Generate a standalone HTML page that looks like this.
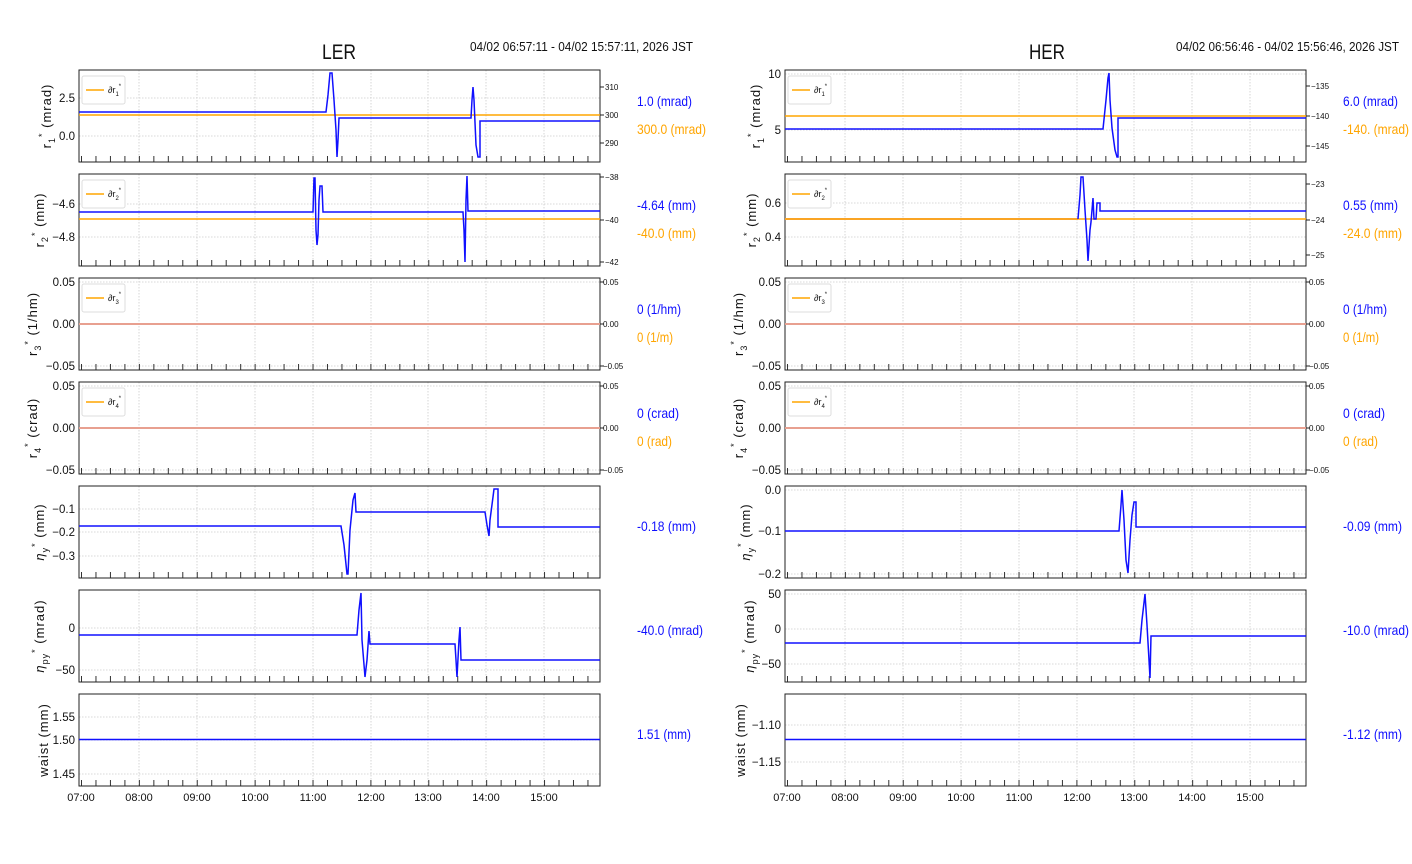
<!DOCTYPE html>
<html><head><meta charset="utf-8"><style>
html,body{margin:0;padding:0;background:#fff;}
svg{display:block;font-family:"Liberation Sans","DejaVu Sans",sans-serif;}
.ax{fill:none;stroke:#222;stroke-width:1}
.hg{stroke:#ccc;stroke-width:0.8;stroke-dasharray:1.5 1.5}
.tk{stroke:#333;stroke-width:6;stroke-dasharray:1 13.47}
.b{fill:none;stroke:#1010ff;stroke-width:1.5}
.o{fill:none;stroke:#ffa500;stroke-width:1.5}
.r{fill:none;stroke:#e8a090;stroke-width:2}
.yl{font-size:11.5px;fill:#111;text-anchor:end}
.yr{font-size:8px;fill:#111}
.lab{font-size:13px;fill:#111;letter-spacing:1px}
.vb{font-size:14px;fill:#1010ff}
.vo{font-size:14px;fill:#ffa500}
.xt{font-size:11px;fill:#111;text-anchor:middle}
</style></head><body>
<svg width="1412" height="864" viewBox="0 0 1412 864">
<defs>
<path id="vgL" d="M139 0v92M197 0v92M255 0v92M313 0v92M371 0v92M428 0v92M486 0v92M544 0v92" stroke="#ccc" stroke-width="0.8" stroke-dasharray="1.5 1.5"/>
<path id="vgH" d="M845 0v92M903 0v92M961 0v92M1019 0v92M1077 0v92M1134 0v92M1192 0v92M1250 0v92" stroke="#ccc" stroke-width="0.8" stroke-dasharray="1.5 1.5"/>
<g id="legL"><rect x="82" y="76" width="43" height="28" fill="#fff" stroke="#ddd" rx="2"/><line x1="86" y1="90" x2="104" y2="90" stroke="#ffa500" stroke-width="1.5"/></g>
</defs>

<text x="339" y="59" font-size="21" text-anchor="middle" fill="#111" textLength="34" lengthAdjust="spacingAndGlyphs">LER</text>
<text x="1047" y="59" font-size="21" text-anchor="middle" fill="#111" textLength="36" lengthAdjust="spacingAndGlyphs">HER</text>
<text x="470" y="51" font-size="13" fill="#111" textLength="223" lengthAdjust="spacingAndGlyphs">04/02 06:57:11 - 04/02 15:57:11, 2026 JST</text>
<text x="1176" y="51" font-size="13" fill="#111" textLength="223" lengthAdjust="spacingAndGlyphs">04/02 06:56:46 - 04/02 15:56:46, 2026 JST</text>

<!-- ========== LER ========== -->
<g>
<use href="#vgL" y="70"/><use href="#vgL" y="174"/><use href="#vgL" y="278"/><use href="#vgL" y="382"/><use href="#vgL" y="486"/><use href="#vgL" y="590"/><use href="#vgL" y="694"/>
<path class="hg" d="M79 98H600M79 136H600M79 204H600M79 237H600M79 282H600M79 324H600M79 366H600M79 386H600M79 428H600M79 470H600M79 509H600M79 532H600M79 556H600M79 628H600M79 670H600M79 717H600M79 740H600M79 774H600"/>
<path class="tk" d="M81 159H600M81 263H600M81 367H600M81 471H600M81 575H600M81 679H600M81 783H600"/>
<rect class="ax" x="79" y="70" width="521" height="92"/>
<rect class="ax" x="79" y="174" width="521" height="92"/>
<rect class="ax" x="79" y="278" width="521" height="92"/>
<rect class="ax" x="79" y="382" width="521" height="92"/>
<rect class="ax" x="79" y="486" width="521" height="92"/>
<rect class="ax" x="79" y="590" width="521" height="92"/>
<rect class="ax" x="79" y="694" width="521" height="92"/>
<use href="#legL"/><text x="108" y="93" font-size="9" fill="#111">∂r<tspan font-size="6" dy="3">1</tspan><tspan font-size="6" dy="-8">*</tspan></text>
<use href="#legL" y="104"/><text x="108" y="197" font-size="9" fill="#111">∂r<tspan font-size="6" dy="3">2</tspan><tspan font-size="6" dy="-8">*</tspan></text>
<use href="#legL" y="208"/><text x="108" y="301" font-size="9" fill="#111">∂r<tspan font-size="6" dy="3">3</tspan><tspan font-size="6" dy="-8">*</tspan></text>
<use href="#legL" y="312"/><text x="108" y="405" font-size="9" fill="#111">∂r<tspan font-size="6" dy="3">4</tspan><tspan font-size="6" dy="-8">*</tspan></text>
<path class="o" d="M79 115H600"/>
<path class="b" d="M79 112H326L328 95L330 73H332L334 100L336 130L337 157L338 140L339 118H471L472 100L473 87L474 100L476 145L478 157H480V121H600"/>
<path class="o" d="M79 219H600"/>
<path class="b" d="M79 212H313L314 178H315L316 230L317 245L318 235L319 200L320 186H322L323 212H463L464 230L465 262L466 200L467 176L468 211H600"/>
<path class="r" d="M79 324H600"/>
<path class="r" d="M79 428H600"/>
<path class="b" d="M79 526H341L344 545L347 574H348L350 530L353 500L355 493L356 512H485L487 525L489 536L490 520L493 497L494 489H498V527H600"/>
<path class="b" d="M79 635H357L359 610L361 593L362 640L365 677L367 660L369 631L370 644H455L456 660L457 677L459 640L460 627L461 660H600"/>
<path class="b" d="M79 739.5H600"/>
<text class="yl" x="75" y="102">2.5</text><text class="yl" x="75" y="140">0.0</text>
<text class="yl" x="75" y="208">−4.6</text><text class="yl" x="75" y="241">−4.8</text>
<text class="yl" x="75" y="286">0.05</text><text class="yl" x="75" y="328">0.00</text><text class="yl" x="75" y="370">−0.05</text>
<text class="yl" x="75" y="390">0.05</text><text class="yl" x="75" y="432">0.00</text><text class="yl" x="75" y="474">−0.05</text>
<text class="yl" x="75" y="513">−0.1</text><text class="yl" x="75" y="536">−0.2</text><text class="yl" x="75" y="560">−0.3</text>
<text class="yl" x="75" y="632">0</text><text class="yl" x="75" y="674">−50</text>
<text class="yl" x="75" y="721">1.55</text><text class="yl" x="75" y="744">1.50</text><text class="yl" x="75" y="778">1.45</text>
<path stroke="#222" d="M600 87h4M600 115h4M600 143h4M600 177h4M600 220h4M600 262h4M600 282h4M600 324h4M600 366h4M600 386h4M600 428h4M600 470h4"/>
<text class="yr" x="605" y="90">310</text><text class="yr" x="605" y="118">300</text><text class="yr" x="605" y="146">290</text>
<text class="yr" x="605" y="180">−38</text><text class="yr" x="605" y="223">−40</text><text class="yr" x="605" y="265">−42</text>
<text class="yr" x="603" y="285">0.05</text><text class="yr" x="603" y="327">0.00</text><text class="yr" x="603" y="369">−0.05</text>
<text class="yr" x="603" y="389">0.05</text><text class="yr" x="603" y="431">0.00</text><text class="yr" x="603" y="473">−0.05</text>
<text class="lab" transform="translate(51,116) rotate(-90)" text-anchor="middle">r<tspan font-size="9" dy="4">1</tspan><tspan font-size="9" dy="-10">*</tspan><tspan dy="6"> (mrad)</tspan></text>
<text class="lab" transform="translate(44,220) rotate(-90)" text-anchor="middle">r<tspan font-size="9" dy="4">2</tspan><tspan font-size="9" dy="-10">*</tspan><tspan dy="6"> (mm)</tspan></text>
<text class="lab" transform="translate(37,324) rotate(-90)" text-anchor="middle">r<tspan font-size="9" dy="4">3</tspan><tspan font-size="9" dy="-10">*</tspan><tspan dy="6"> (1/hm)</tspan></text>
<text class="lab" transform="translate(37,428) rotate(-90)" text-anchor="middle">r<tspan font-size="9" dy="4">4</tspan><tspan font-size="9" dy="-10">*</tspan><tspan dy="6"> (crad)</tspan></text>
<text class="lab" transform="translate(44,532) rotate(-90)" text-anchor="middle"><tspan font-style="italic">η</tspan><tspan font-size="9" dy="4">y</tspan><tspan font-size="9" dy="-10">*</tspan><tspan dy="6"> (mm)</tspan></text>
<text class="lab" transform="translate(44,636) rotate(-90)" text-anchor="middle"><tspan font-style="italic">η</tspan><tspan font-size="9" dy="4">py</tspan><tspan font-size="9" dy="-10">*</tspan><tspan dy="6"> (mrad)</tspan></text>
<text class="lab" transform="translate(48,740) rotate(-90)" text-anchor="middle">waist (mm)</text>
<text class="vb" x="637" y="106" textLength="55" lengthAdjust="spacingAndGlyphs">1.0 (mrad)</text><text class="vo" x="637" y="134" textLength="69" lengthAdjust="spacingAndGlyphs">300.0 (mrad)</text>
<text class="vb" x="637" y="210" textLength="59" lengthAdjust="spacingAndGlyphs">-4.64 (mm)</text><text class="vo" x="637" y="238" textLength="59" lengthAdjust="spacingAndGlyphs">-40.0 (mm)</text>
<text class="vb" x="637" y="314" textLength="44" lengthAdjust="spacingAndGlyphs">0 (1/hm)</text><text class="vo" x="637" y="342" textLength="36" lengthAdjust="spacingAndGlyphs">0 (1/m)</text>
<text class="vb" x="637" y="418" textLength="42" lengthAdjust="spacingAndGlyphs">0 (crad)</text><text class="vo" x="637" y="446" textLength="35" lengthAdjust="spacingAndGlyphs">0 (rad)</text>
<text class="vb" x="637" y="531" textLength="59" lengthAdjust="spacingAndGlyphs">-0.18 (mm)</text>
<text class="vb" x="637" y="635" textLength="66" lengthAdjust="spacingAndGlyphs">-40.0 (mrad)</text>
<text class="vb" x="637" y="739" textLength="54" lengthAdjust="spacingAndGlyphs">1.51 (mm)</text>
<text class="xt" x="81" y="801">07:00</text><text class="xt" x="139" y="801">08:00</text><text class="xt" x="197" y="801">09:00</text><text class="xt" x="255" y="801">10:00</text><text class="xt" x="313" y="801">11:00</text><text class="xt" x="371" y="801">12:00</text><text class="xt" x="428" y="801">13:00</text><text class="xt" x="486" y="801">14:00</text><text class="xt" x="544" y="801">15:00</text>
</g>

<!-- ========== HER ========== -->
<g>
<use href="#vgH" y="70"/><use href="#vgH" y="174"/><use href="#vgH" y="278"/><use href="#vgH" y="382"/><use href="#vgH" y="486"/><use href="#vgH" y="590"/><use href="#vgH" y="694"/>
<path class="hg" d="M785 74H1306M785 130H1306M785 203H1306M785 237H1306M785 282H1306M785 324H1306M785 366H1306M785 386H1306M785 428H1306M785 470H1306M785 490H1306M785 531H1306M785 574H1306M785 594H1306M785 629H1306M785 664H1306M785 725H1306M785 762H1306"/>
<path class="tk" d="M787 159H1306M787 263H1306M787 367H1306M787 471H1306M787 575H1306M787 679H1306M787 783H1306"/>
<rect class="ax" x="785" y="70" width="521" height="92"/>
<rect class="ax" x="785" y="174" width="521" height="92"/>
<rect class="ax" x="785" y="278" width="521" height="92"/>
<rect class="ax" x="785" y="382" width="521" height="92"/>
<rect class="ax" x="785" y="486" width="521" height="92"/>
<rect class="ax" x="785" y="590" width="521" height="92"/>
<rect class="ax" x="785" y="694" width="521" height="92"/>
<use href="#legL" x="706"/><text x="814" y="93" font-size="9" fill="#111">∂r<tspan font-size="6" dy="3">1</tspan><tspan font-size="6" dy="-8">*</tspan></text>
<use href="#legL" x="706" y="104"/><text x="814" y="197" font-size="9" fill="#111">∂r<tspan font-size="6" dy="3">2</tspan><tspan font-size="6" dy="-8">*</tspan></text>
<use href="#legL" x="706" y="208"/><text x="814" y="301" font-size="9" fill="#111">∂r<tspan font-size="6" dy="3">3</tspan><tspan font-size="6" dy="-8">*</tspan></text>
<use href="#legL" x="706" y="312"/><text x="814" y="405" font-size="9" fill="#111">∂r<tspan font-size="6" dy="3">4</tspan><tspan font-size="6" dy="-8">*</tspan></text>
<path class="o" d="M785 116H1306"/>
<path class="b" d="M785 129H1103L1106 100L1108 78L1109 73L1110 100L1112 128L1115 150L1117 157H1118V118H1306"/>
<path class="r" d="M785 219H1078"/>
<path class="o" d="M785 219H1306"/>
<path class="b" d="M1078 219L1080 195L1081 177H1083L1085 210L1087 240L1088 261L1090 230L1091 222L1092 210L1093 198L1094 219H1096L1097 203H1100V211H1306"/>
<path class="r" d="M785 324H1306"/>
<path class="r" d="M785 428H1306"/>
<path class="b" d="M785 531H1119L1121 505L1122 490L1124 520L1126 560L1128 573L1130 540L1132 515L1134 502H1136V527H1306"/>
<path class="b" d="M785 643H1140L1142 620L1145 594L1147 625L1149 660L1150 678L1151 636H1306"/>
<path class="b" d="M785 739.5H1306"/>
<text class="yl" x="781" y="78">10</text><text class="yl" x="781" y="134">5</text>
<text class="yl" x="781" y="207">0.6</text><text class="yl" x="781" y="241">0.4</text>
<text class="yl" x="781" y="286">0.05</text><text class="yl" x="781" y="328">0.00</text><text class="yl" x="781" y="370">−0.05</text>
<text class="yl" x="781" y="390">0.05</text><text class="yl" x="781" y="432">0.00</text><text class="yl" x="781" y="474">−0.05</text>
<text class="yl" x="781" y="494">0.0</text><text class="yl" x="781" y="535">−0.1</text><text class="yl" x="781" y="578">−0.2</text>
<text class="yl" x="781" y="598">50</text><text class="yl" x="781" y="633">0</text><text class="yl" x="781" y="668">−50</text>
<text class="yl" x="781" y="729">−1.10</text><text class="yl" x="781" y="766">−1.15</text>
<path stroke="#222" d="M1306 86h4M1306 116h4M1306 146h4M1306 184h4M1306 220h4M1306 255h4M1306 282h4M1306 324h4M1306 366h4M1306 386h4M1306 428h4M1306 470h4"/>
<text class="yr" x="1311" y="89">−135</text><text class="yr" x="1311" y="119">−140</text><text class="yr" x="1311" y="149">−145</text>
<text class="yr" x="1311" y="187">−23</text><text class="yr" x="1311" y="223">−24</text><text class="yr" x="1311" y="258">−25</text>
<text class="yr" x="1309" y="285">0.05</text><text class="yr" x="1309" y="327">0.00</text><text class="yr" x="1309" y="369">−0.05</text>
<text class="yr" x="1309" y="389">0.05</text><text class="yr" x="1309" y="431">0.00</text><text class="yr" x="1309" y="473">−0.05</text>
<text class="lab" transform="translate(760,116) rotate(-90)" text-anchor="middle">r<tspan font-size="9" dy="4">1</tspan><tspan font-size="9" dy="-10">*</tspan><tspan dy="6"> (mrad)</tspan></text>
<text class="lab" transform="translate(756,220) rotate(-90)" text-anchor="middle">r<tspan font-size="9" dy="4">2</tspan><tspan font-size="9" dy="-10">*</tspan><tspan dy="6"> (mm)</tspan></text>
<text class="lab" transform="translate(743,324) rotate(-90)" text-anchor="middle">r<tspan font-size="9" dy="4">3</tspan><tspan font-size="9" dy="-10">*</tspan><tspan dy="6"> (1/hm)</tspan></text>
<text class="lab" transform="translate(743,428) rotate(-90)" text-anchor="middle">r<tspan font-size="9" dy="4">4</tspan><tspan font-size="9" dy="-10">*</tspan><tspan dy="6"> (crad)</tspan></text>
<text class="lab" transform="translate(750,532) rotate(-90)" text-anchor="middle"><tspan font-style="italic">η</tspan><tspan font-size="9" dy="4">y</tspan><tspan font-size="9" dy="-10">*</tspan><tspan dy="6"> (mm)</tspan></text>
<text class="lab" transform="translate(754,636) rotate(-90)" text-anchor="middle"><tspan font-style="italic">η</tspan><tspan font-size="9" dy="4">py</tspan><tspan font-size="9" dy="-10">*</tspan><tspan dy="6"> (mrad)</tspan></text>
<text class="lab" transform="translate(745,740) rotate(-90)" text-anchor="middle">waist (mm)</text>
<text class="vb" x="1343" y="106" textLength="55" lengthAdjust="spacingAndGlyphs">6.0 (mrad)</text><text class="vo" x="1343" y="134" textLength="66" lengthAdjust="spacingAndGlyphs">-140. (mrad)</text>
<text class="vb" x="1343" y="210" textLength="55" lengthAdjust="spacingAndGlyphs">0.55 (mm)</text><text class="vo" x="1343" y="238" textLength="59" lengthAdjust="spacingAndGlyphs">-24.0 (mm)</text>
<text class="vb" x="1343" y="314" textLength="44" lengthAdjust="spacingAndGlyphs">0 (1/hm)</text><text class="vo" x="1343" y="342" textLength="36" lengthAdjust="spacingAndGlyphs">0 (1/m)</text>
<text class="vb" x="1343" y="418" textLength="42" lengthAdjust="spacingAndGlyphs">0 (crad)</text><text class="vo" x="1343" y="446" textLength="35" lengthAdjust="spacingAndGlyphs">0 (rad)</text>
<text class="vb" x="1343" y="531" textLength="59" lengthAdjust="spacingAndGlyphs">-0.09 (mm)</text>
<text class="vb" x="1343" y="635" textLength="66" lengthAdjust="spacingAndGlyphs">-10.0 (mrad)</text>
<text class="vb" x="1343" y="739" textLength="59" lengthAdjust="spacingAndGlyphs">-1.12 (mm)</text>
<text class="xt" x="787" y="801">07:00</text><text class="xt" x="845" y="801">08:00</text><text class="xt" x="903" y="801">09:00</text><text class="xt" x="961" y="801">10:00</text><text class="xt" x="1019" y="801">11:00</text><text class="xt" x="1077" y="801">12:00</text><text class="xt" x="1134" y="801">13:00</text><text class="xt" x="1192" y="801">14:00</text><text class="xt" x="1250" y="801">15:00</text>
</g>
</svg>
</body></html>
